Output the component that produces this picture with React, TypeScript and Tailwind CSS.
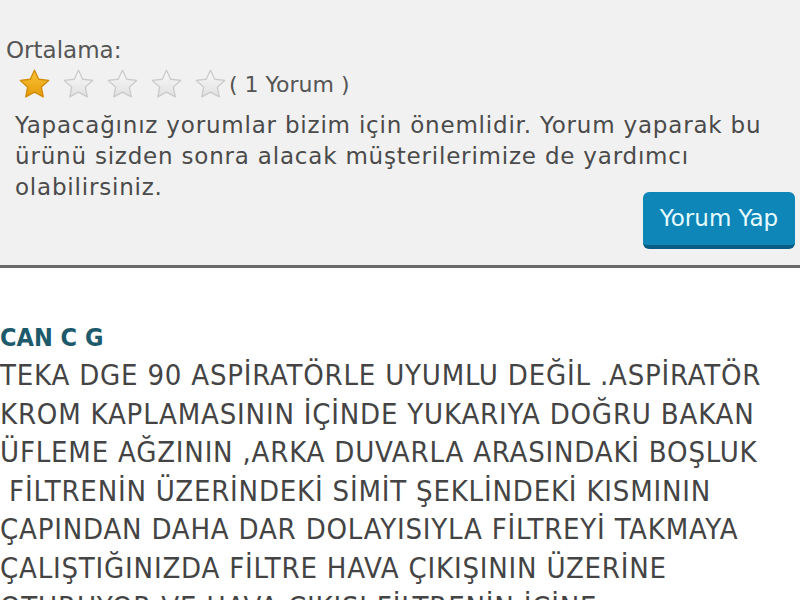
import React from "react";

const reviewLines = [
  "TEKA DGE 90 ASPİRATÖRLE UYUMLU DEĞİL .ASPİRATÖR",
  "KROM KAPLAMASININ İÇİNDE YUKARIYA DOĞRU BAKAN",
  "ÜFLEME AĞZININ ,ARKA DUVARLA ARASINDAKİ BOŞLUK",
  " FİLTRENİN ÜZERİNDEKİ SİMİT ŞEKLİNDEKİ KISMININ",
  "ÇAPINDAN DAHA DAR DOLAYISIYLA FİLTREYİ TAKMAYA",
  "ÇALIŞTIĞINIZDA FİLTRE HAVA ÇIKIŞININ ÜZERİNE",
  "OTURUYOR VE HAVA ÇIKIŞI FİLTRENİN İÇİNE",
];

const Star = ({ filled }: { filled: boolean }) => (
  <svg width="35" height="35" viewBox="0 0 24 24">
    <defs>
      <linearGradient id="gold" x1="0" y1="0" x2="0" y2="1">
        <stop offset="0%" stopColor="#fcc53a" />
        <stop offset="100%" stopColor="#e39a07" />
      </linearGradient>
      <linearGradient id="grey" x1="0" y1="0" x2="0" y2="1">
        <stop offset="0%" stopColor="#fafafa" />
        <stop offset="100%" stopColor="#e0e0e0" />
      </linearGradient>
    </defs>
    <path
      d="M12 2.2l2.9 6.2 6.8.8-5 4.6 1.3 6.7L12 17.2l-6 3.3 1.3-6.7-5-4.6 6.8-.8z"
      fill={filled ? "url(#gold)" : "url(#grey)"}
      stroke={filled ? "#d08a05" : "#cacaca"}
      strokeWidth="0.9"
      strokeLinejoin="round"
    />
  </svg>
);

export default function App() {
  return (
    <div
      className="w-[800px] h-[600px] overflow-hidden bg-white"
      style={{ fontFamily: '"DejaVu Sans", sans-serif' }}
    >
      {/* rating box */}
      <div className="h-[265px] bg-[#f1f1f1] pt-[36px]">
        <div className="pl-[6px] text-[23px] leading-[28px] text-[#555]">Ortalama:</div>
        <div className="flex items-center pl-[17px] mt-[3px] h-[34px]">
          <div className="flex gap-[9px]">
            {[0, 1, 2, 3, 4].map((i) => (
              <Star key={i} filled={i === 0} />
            ))}
          </div>
          <span className="text-[22px] text-[#555] ml-[1px]">( 1 Yorum )</span>
        </div>
        <p className="pl-[15px] mt-[9px] text-[23px] leading-[31px] text-[#4a4a4a] tracking-[0.8px]">
          Yapacağınız yorumlar bizim için önemlidir. Yorum yaparak bu
          <br />
          ürünü sizden sonra alacak müşterilerimize de yardımcı
          <br />
          olabilirsiniz.
        </p>
        <div className="flex justify-end pr-[5px] -mt-[11px]">
          <button className="w-[152px] h-[57px] rounded-[6px] bg-[#0f86b8] border-b-[4px] border-[#095e83] text-[#e6fbff] text-[23px]">
            Yorum Yap
          </button>
        </div>
      </div>
      <div className="h-[3px] bg-[#6a6a6a]" />

      {/* review */}
      <div className="pt-[55px]" style={{ fontStretch: "condensed" }}>
        <div className="text-[25px] leading-[30px] font-bold text-[#1d5a6c]">CAN C G</div>
        <div className="mt-[3px] text-[29px] leading-[38.6px] text-[#444] whitespace-pre tracking-[0.8px]">
          {reviewLines.map((l, i) => (
            <div key={i}>{l}</div>
          ))}
        </div>
      </div>
    </div>
  );
}
